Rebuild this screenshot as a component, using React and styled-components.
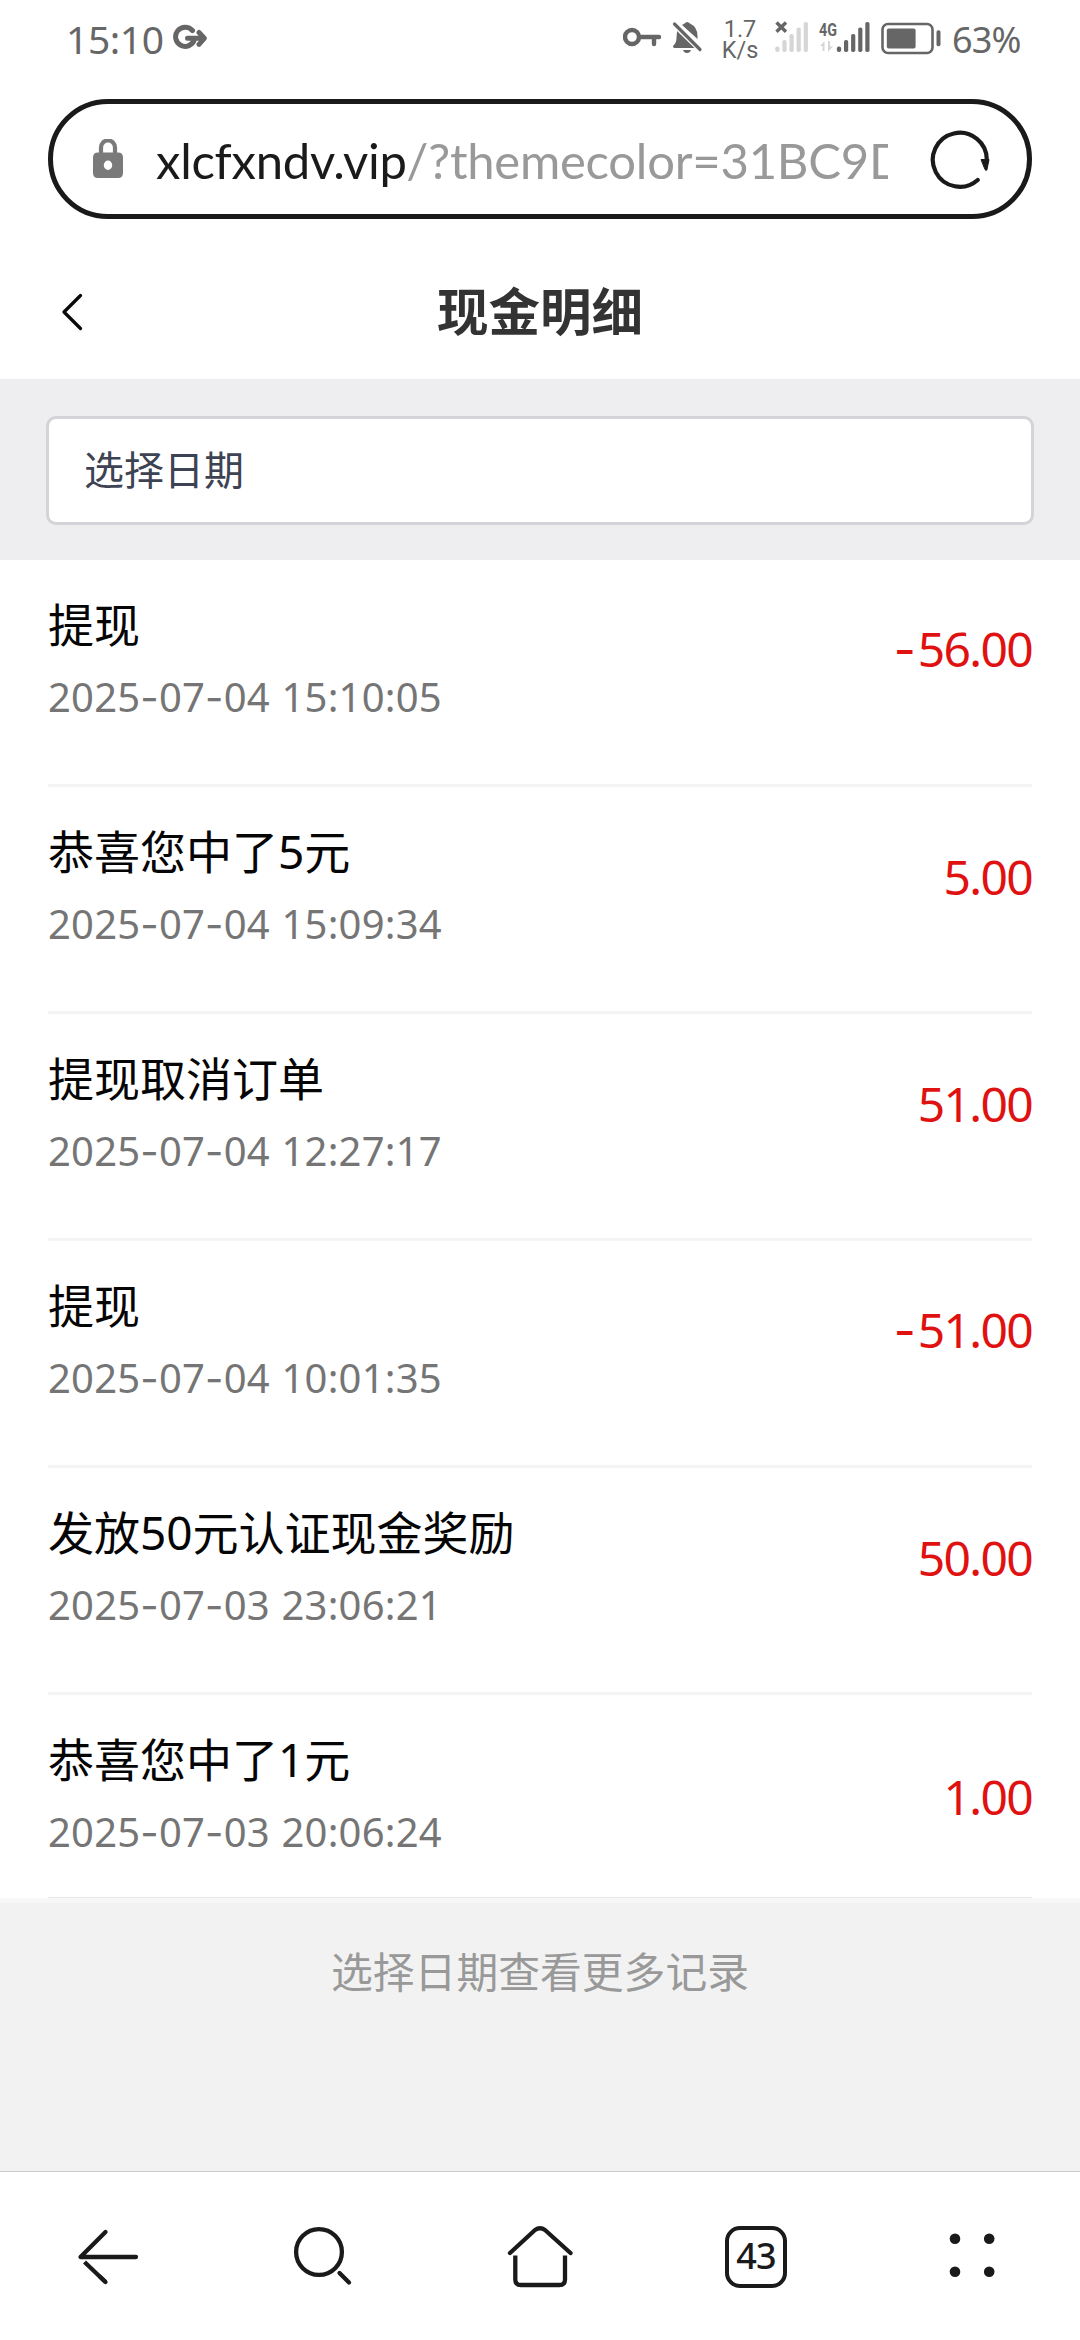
import React from "react";
import styled, { createGlobalStyle } from "styled-components";

const GlobalStyle = createGlobalStyle`
  * { box-sizing: border-box; }
  body {
    margin: 0;
    background: #fff;
    font-family: "Noto Sans", "Noto Sans CJK SC", sans-serif;
  }
  svg { display: block; flex: none; }
`;

const Screen = styled.div`
  width: 1080px;
  height: 2340px;
  display: flex;
  flex-direction: column;
  background: #fff;
  overflow: hidden;
`;

// phone status bar
const StatusBar = styled.div`
  height: 99px;
  padding: 0 60px 0 66px;
  display: flex;
  justify-content: space-between;
  color: #666;
`;

const StatusGroup = styled.div`
  height: 80px;
  display: flex;
  align-items: center;
`;

const Clock = styled.span`
  width: 107px;
  padding-bottom: 2px;
  font-size: 39px;
  line-height: 50px;
  letter-spacing: -0.4px;
  white-space: nowrap;
`;

const NetSpeed = styled.div`
  width: 36px;
  margin: 0 17px 0 19px;
  padding-bottom: 1px;
  display: flex;
  flex-direction: column;
  align-items: center;
  font-family: Roboto, sans-serif;
  font-size: 23.5px;
  line-height: 21px;
  white-space: nowrap;
`;

const SignalGap = styled.span`
  width: 9.5px;
`;

const BatteryGap = styled.span`
  width: 11.5px;
`;

const Battery = styled.span`
  width: 68px;
  margin-left: 11px;
  font-size: 36px;
  line-height: 50px;
  letter-spacing: -0.9px;
  white-space: nowrap;
`;

// browser address bar
const AddressBar = styled.div`
  height: 120px;
  margin: 0 48px;
  padding: 0 37px 0 40px;
  display: flex;
  align-items: center;
  border: 5px solid #1a1a1a;
  border-radius: 60px;
`;

const Url = styled.div`
  width: 732px;
  margin: 0 42px 0 33px;
  padding-top: 2px;
  overflow: hidden;
  white-space: nowrap;
  font-family: Lato, sans-serif;
  font-size: 49px;
  line-height: 70px;
  letter-spacing: -0.25px;
  color: #999;
`;

const Domain = styled.span`
  color: #1a1a1a;
`;

const TitleBar = styled.div`
  height: 160px;
  padding: 25px 60px 0;
  display: grid;
  grid-template-columns: 100px 1fr 100px;
  align-items: center;
`;

const Title = styled.h1`
  margin: 0;
  padding-bottom: 2px;
  text-align: center;
  font-size: 51.5px;
  line-height: 70px;
  font-weight: 700;
  color: #333;
`;

const FilterArea = styled.div`
  height: 181px;
  padding: 37px 46px 0;
  background: #eeeef1;
`;

const DateField = styled.div`
  height: 109px;
  padding-left: 35px;
  border: 3px solid #d3d3d8;
  border-radius: 10px;
  background: #fff;
  color: #3d4352;
  font-size: 40px;
  line-height: 102px;
`;

const List = styled.div`
  padding: 0 48px;
  background: #fff;
`;

const Row = styled.div`
  height: ${(p) => (p.$last ? 203 : 227)}px;
  padding-bottom: ${(p) => (p.$last ? 0 : 46)}px;
  display: flex;
  justify-content: space-between;
  align-items: center;
  border-bottom: ${(p) => (p.$last ? 1 : 3)}px solid ${(p) => (p.$last ? "#e8e8e8" : "#f4f4f4")};
`;

const RowText = styled.div`
  align-self: flex-start;
  padding-top: 34px;
`;

const RowTitle = styled.div`
  font-size: 46px;
  line-height: 60px;
  color: #050505;
`;

const RowDate = styled.div`
  margin-top: 18px;
  font-size: 40px;
  line-height: 50px;
  letter-spacing: 0.2px;
  word-spacing: 1px;
  color: #757575;
`;

const Dash = styled.span`
  font-family: Inter, sans-serif;
`;

const Amount = styled.div`
  padding-top: 1px;
  font-size: 48px;
  line-height: 60px;
  letter-spacing: -1.7px;
  color: #e01111;

  ${Dash} {
    letter-spacing: 2px;
  }
`;

const More = styled.div`
  flex: 1;
  padding-top: 38px;
  border-top: 5px solid #f7f7f7;
  background: #f2f2f2;
  text-align: center;
  font-size: 41.8px;
  line-height: 62px;
  color: #999;
`;

const NavBar = styled.div`
  height: 169px;
  border-top: 1px solid #ccc;
  display: grid;
  grid-template-columns: repeat(5, 1fr);
  justify-items: center;
  background: #fff;
`;

const NavItem = styled.div`
  height: 170px;
  display: flex;
  align-items: center;
`;

const TabCount = styled.div`
  width: 62px;
  height: 62px;
  border: 4.5px solid #1a1a1a;
  border-radius: 15px;
  text-align: center;
  font-size: 36px;
  font-weight: 500;
  line-height: 51px;
  letter-spacing: -0.8px;
  color: #1a1a1a;
`;

const records = [
  { title: "提现", date: "2025-07-04 15:10:05", amount: "-56.00" },
  { title: "恭喜您中了5元", date: "2025-07-04 15:09:34", amount: "5.00" },
  { title: "提现取消订单", date: "2025-07-04 12:27:17", amount: "51.00" },
  { title: "提现", date: "2025-07-04 10:01:35", amount: "-51.00" },
  { title: "发放50元认证现金奖励", date: "2025-07-03 23:06:21", amount: "50.00" },
  { title: "恭喜您中了1元", date: "2025-07-03 20:06:24", amount: "1.00" },
];

// hyphens are set in a wider face than the digits
const withDashes = (text) =>
  text.split("-").map((part, i) => (
    <React.Fragment key={i}>
      {i > 0 && <Dash>-</Dash>}
      {part}
    </React.Fragment>
  ));

const GoIcon = () => (
  <svg width="35" height="80" viewBox="173 0 35 80" fill="none" stroke="#666" strokeWidth="5" strokeLinecap="round" strokeLinejoin="round">
    <path d="M192.5 30.5A9.6 9.6 0 1 0 194.4 39.5M187.5 38.3H204M199 32.5L204.3 38.3L199 44.3" />
  </svg>
);

const KeyIcon = () => (
  <svg width="39" height="80" viewBox="623 0 39 80" fill="none" stroke="#666" strokeWidth="4.4" strokeLinecap="round">
    <circle cx="632" cy="37" r="7" />
    <path d="M640 37H659M654 38V44" />
  </svg>
);

const BellOffIcon = () => (
  <svg width="41" height="80" viewBox="662 0 41 80" fill="#666">
    <path d="M677 31L694.5 48H674.5Q672 47 673.5 45.5Q676.5 43 676.5 38Z" />
    <path d="M682 25Q683.5 24 684.5 23.5Q687 20.5 690 23.5Q697.5 27 697.5 36V39Z" />
    <path d="M683 50H691Q690 53 687 53Q684 53 683 50Z" />
    <path d="M674.5 24L700 49.5" stroke="#666" strokeWidth="3.2" strokeLinecap="round" />
  </svg>
);

const bars = [
  { x: 0, top: 46.5 },
  { x: 7.1, top: 40 },
  { x: 14.2, top: 34 },
  { x: 21.3, top: 27.5 },
  { x: 28.4, top: 22 },
];

const Bars = ({ x, color }) =>
  bars.map((b) => (
    <rect key={b.x} x={x + b.x} y={b.top} width="4.2" height={52 - b.top} rx="1.8" fill={color} />
  ));

const NoSimIcon = () => (
  <svg width="34" height="80" viewBox="775.5 0 34 80">
    <path d="M777 22.5L786.5 31.8M786.5 22.5L777 31.8" stroke="#666" strokeWidth="3.4" />
    <Bars x={775.8} color="#d6d6d6" />
  </svg>
);

const SignalIcon = () => (
  <svg width="51" height="80" viewBox="819 0 51 80">
    <text x="819" y="35.5" fontFamily="Roboto" fontSize="18.5" fontWeight="700" textLength="18" lengthAdjust="spacingAndGlyphs" fill="#666">4G</text>
    <path d="M820 46L824.5 41V51H822.5V46ZM828 41V52L833 46.5H830V41Z" fill="#d6d6d6" />
    <Bars x={836.9} color="#666" />
  </svg>
);

const BatteryIcon = () => (
  <svg width="60" height="80" viewBox="881.5 0 60 80">
    <rect x="883" y="24" width="50" height="29" rx="5.5" fill="none" stroke="#666" strokeWidth="2.6" />
    <rect x="887.3" y="28.6" width="28.8" height="19.8" rx="2" fill="#666" />
    <rect x="937" y="30.3" width="4" height="16" rx="1.8" fill="#666" />
  </svg>
);

const LockIcon = () => (
  <svg width="30" height="40" viewBox="93 140 30 40">
    <path d="M101 155V148.5A7 7 0 0 1 115 148.5V155" fill="none" stroke="#7a7a7a" strokeWidth="4.2" />
    <path fillRule="evenodd" fill="#7a7a7a" d="M98 153.5H118Q123 153.5 123 158.5V174Q123 179 118 179H98Q93 179 93 174V158.5Q93 153.5 98 153.5ZM108 161.5A4 4.5 0 0 0 108 171A4 4.5 0 0 0 108 161.5Z" />
  </svg>
);

const ReloadIcon = () => (
  <svg width="60" height="60" viewBox="930 128.5 60 60">
    <path d="M977.7 179.5A27 27 0 1 1 986.8 160" fill="none" stroke="#1a1a1a" strokeWidth="4.2" strokeLinecap="round" />
    <path d="M981 159H989L987 169Q986.5 171 985 169Z" fill="#1a1a1a" stroke="#1a1a1a" strokeWidth="1" strokeLinejoin="round" />
  </svg>
);

const ChevronIcon = () => (
  <svg width="24" height="40" viewBox="60 292 24 40" fill="none" stroke="#0a0a0a" strokeWidth="3.3" strokeLinecap="round" strokeLinejoin="round">
    <path d="M80.5 295.5L64 312L80.5 328.5" />
  </svg>
);

const NavIcon = ({ cx, children }) => (
  <svg width="80" height="80" viewBox={`${cx - 40} 2217 80 80`} fill="none" stroke="#1a1a1a" strokeWidth="4.3" strokeLinecap="round" strokeLinejoin="round">
    {children}
  </svg>
);

const App = () => {
  return (
    <>
      <GlobalStyle />
      <Screen>
        <StatusBar>
          <StatusGroup>
            <Clock>15:10</Clock>
            <GoIcon />
          </StatusGroup>
          <StatusGroup>
            <KeyIcon />
            <BellOffIcon />
            <NetSpeed>
              <span>1.7</span>
              <span>K/s</span>
            </NetSpeed>
            <NoSimIcon />
            <SignalGap />
            <SignalIcon />
            <BatteryGap />
            <BatteryIcon />
            <Battery>63%</Battery>
          </StatusGroup>
        </StatusBar>

        <AddressBar>
          <LockIcon />
          <Url>
            <Domain>xlcfxndv.vip</Domain>/?themecolor=31BC9D
          </Url>
          <ReloadIcon />
        </AddressBar>

        <TitleBar>
          <ChevronIcon />
          <Title>现金明细</Title>
        </TitleBar>

        <FilterArea>
          <DateField>选择日期</DateField>
        </FilterArea>

        <List>
          {records.map((record, index) => (
            <Row key={record.date} $last={index === records.length - 1}>
              <RowText>
                <RowTitle>{record.title}</RowTitle>
                <RowDate>{withDashes(record.date)}</RowDate>
              </RowText>
              <Amount>{withDashes(record.amount)}</Amount>
            </Row>
          ))}
        </List>

        <More>选择日期查看更多记录</More>

        <NavBar>
          <NavItem>
            <NavIcon cx={108}>
              <path d="M105.5 2232L80.5 2257H136" />
              <path d="M84.5 2262L105.5 2282" strokeLinecap="butt" />
              <path d="M100 2276.8L105.5 2282" />
            </NavIcon>
          </NavItem>
          <NavItem>
            <NavIcon cx={324}>
              <circle cx="319" cy="2252" r="22.9" />
              <path d="M339.5 2273L349 2282.5" />
            </NavIcon>
          </NavItem>
          <NavItem>
            <NavIcon cx={540}>
              <path d="M510 2253L535 2230Q540 2226.5 545 2230L570.5 2253" />
              <path d="M515.3 2255.5V2279.5Q515.3 2285 520.8 2285H559.5Q565 2285 565 2279.5V2255.5" strokeLinecap="butt" />
            </NavIcon>
          </NavItem>
          <NavItem>
            <TabCount>43</TabCount>
          </NavItem>
          <NavItem>
            <NavIcon cx={972}>
              {[955, 989.2].map((x) =>
                [2238.7, 2271.7].map((y) => (
                  <circle key={x + y} cx={x} cy={y} r="5.3" fill="#1a1a1a" stroke="none" />
                ))
              )}
            </NavIcon>
          </NavItem>
        </NavBar>
      </Screen>
    </>
  );
};

export default App;
